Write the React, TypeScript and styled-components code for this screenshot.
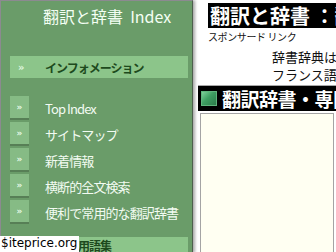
import * as React from "react";
import styled, { createGlobalStyle } from "styled-components";

const GlobalStyle = createGlobalStyle`
    html, body {
        margin: 0;
        padding: 0;
        background: #ffffff;
        overflow: hidden;
    }
    body {
        font-family: "Noto Sans CJK JP", "Noto Sans", sans-serif;
    }
`;

const Page = styled.div`
    width: 336px;
    height: 252px;
    display: flex;
    flex-direction: row;
    overflow: hidden;
    position: relative;
`;

const Sidebar = styled.div`
    width: 191px;
    flex-shrink: 0;
    height: 100%;
    background: #6a9c69;
    border-left: 1px solid #8c8a90;
    border-top: 1px solid #8c8a90;
    border-right: 1px solid #4d5f4d;
    box-shadow: 2px 0 3px rgba(0, 0, 0, 0.35);
    position: relative;
    z-index: 1;
    display: flex;
    flex-direction: column;
`;

const SiteTitle = styled.div`
    color: #f4fff4;
    font-size: 16px;
    line-height: 20px;
    padding: 5px 0 0 42px;
    white-space: nowrap;
    height: 37px;
`;

const SectionBar = styled.div`
    margin: 21px 0 0 9px;
    width: 178px;
    height: 22px;
    background: #8cc58a;
    display: flex;
    align-items: center;
    flex-shrink: 0;
`;

const Chevron = styled.span`
    font-family: "DejaVu Sans", sans-serif;
    font-size: 10px;
    font-weight: bold;
    color: #dff5de;
    width: 35px;
    padding-left: 8px;
    box-sizing: border-box;
`;

const SectionLabel = styled.span`
    color: #1d4a1d;
    font-weight: bold;
    font-size: 12px;
    letter-spacing: -1px;
    white-space: nowrap;
`;

const MenuList = styled.div`
    margin: 18px 0 0 9px;
    display: flex;
    flex-direction: column;
    gap: 2px;
`;

const MenuItem = styled.div`
    display: flex;
    align-items: center;
    height: 24px;
`;

const MenuBox = styled.div`
    width: 19px;
    height: 24px;
    background: #86bb85;
    border-bottom: 2px solid #577f56;
    box-sizing: border-box;
    display: flex;
    align-items: center;
    justify-content: center;
    color: #e4f7e3;
    font-family: "DejaVu Sans", sans-serif;
    font-size: 9px;
    font-weight: bold;
`;

const MenuLabel = styled.span`
    color: #f2fbf2;
    font-size: 13px;
    margin-left: 16px;
    white-space: nowrap;
    letter-spacing: -0.9px;
`;

const BottomBar = styled(SectionBar)`
    margin-top: 13px;
    height: 16px;
    align-items: flex-start;
`;

const Main = styled.div`
    flex: 1;
    min-width: 0;
    padding-left: 5px;
    display: flex;
    flex-direction: column;
    overflow: hidden;
`;

const TopBar = styled.div`
    margin: 3px 0 0 10px;
    height: 25px;
    flex-shrink: 0;
    background: #000000;
    color: #ffffff;
    font-weight: bold;
    font-size: 20px;
    line-height: 25px;
    padding-left: 2px;
    white-space: nowrap;
    overflow: hidden;
`;

const Sponsored = styled.div`
    margin: 3px 0 0 10px;
    font-size: 10px;
    line-height: 11px;
    color: #111111;
    white-space: nowrap;
    letter-spacing: -0.4px;
`;

const Intro = styled.div`
    margin: 6px 0 0 74px;
    font-size: 13px;
    line-height: 18px;
    color: #111111;
    white-space: nowrap;
    overflow: hidden;
`;

const Rule = styled.div`
    margin-top: 1px;
    height: 1px;
    background: #a8a8a8;
`;

const SectionHead = styled.div`
    height: 25px;
    flex-shrink: 0;
    background: #000000;
    display: flex;
    align-items: center;
    padding-left: 3px;
    white-space: nowrap;
    overflow: hidden;
`;

const HeadIcon = styled.div`
    width: 16px;
    height: 15px;
    flex-shrink: 0;
    background: linear-gradient(135deg, #7fd09a 0%, #3e9e62 45%, #2c7c4a 100%);
    border: 1px solid #5fb47c;
    box-sizing: border-box;
`;

const HeadText = styled.span`
    margin-left: 5px;
    color: #ffffff;
    font-weight: bold;
    font-size: 19px;
    letter-spacing: -0.5px;
`;

const ContentBox = styled.div`
    margin: 2px 2px 0 2px;
    flex: 1;
    background: #fffff2;
    border: 1px solid #a4a4a4;
    border-bottom: none;
`;

const Watermark = styled.div`
    position: absolute;
    left: 0;
    bottom: 0;
    z-index: 2;
    background: #ffffff;
    color: #000000;
    font-family: "DejaVu Sans", sans-serif;
    font-size: 12px;
    line-height: 15px;
    padding: 0 2px 1px 1px;
`;

const menuItems = ["Top Index", "サイトマップ", "新着情報", "横断的全文検索", "便利で常用的な翻訳辞書"];

export default function App() {
    return (
        <>
            <GlobalStyle />
            <Page>
                <Sidebar>
                    <SiteTitle>翻訳と辞書&nbsp; Index</SiteTitle>
                    <SectionBar>
                        <Chevron>»</Chevron>
                        <SectionLabel>インフォメーション</SectionLabel>
                    </SectionBar>
                    <MenuList>
                        {menuItems.map(item => (
                            <MenuItem key={item}>
                                <MenuBox>»</MenuBox>
                                <MenuLabel>{item}</MenuLabel>
                            </MenuItem>
                        ))}
                    </MenuList>
                    <BottomBar>
                        <Chevron>»</Chevron>
                        <SectionLabel>分野別用語集</SectionLabel>
                    </BottomBar>
                </Sidebar>
                <Main>
                    <TopBar>翻訳と辞書 ：翻訳辞書・専門用語辞典</TopBar>
                    <Sponsored>スポンサード リンク</Sponsored>
                    <Intro>
                        <div>辞書辞典は、英語・ドイツ語・</div>
                        <div>フランス語翻訳のための</div>
                    </Intro>
                    <Rule />
                    <SectionHead>
                        <HeadIcon />
                        <HeadText>翻訳辞書・専門用語辞典</HeadText>
                    </SectionHead>
                    <ContentBox />
                </Main>
                <Watermark>$iteprice.org</Watermark>
            </Page>
        </>
    );
}
